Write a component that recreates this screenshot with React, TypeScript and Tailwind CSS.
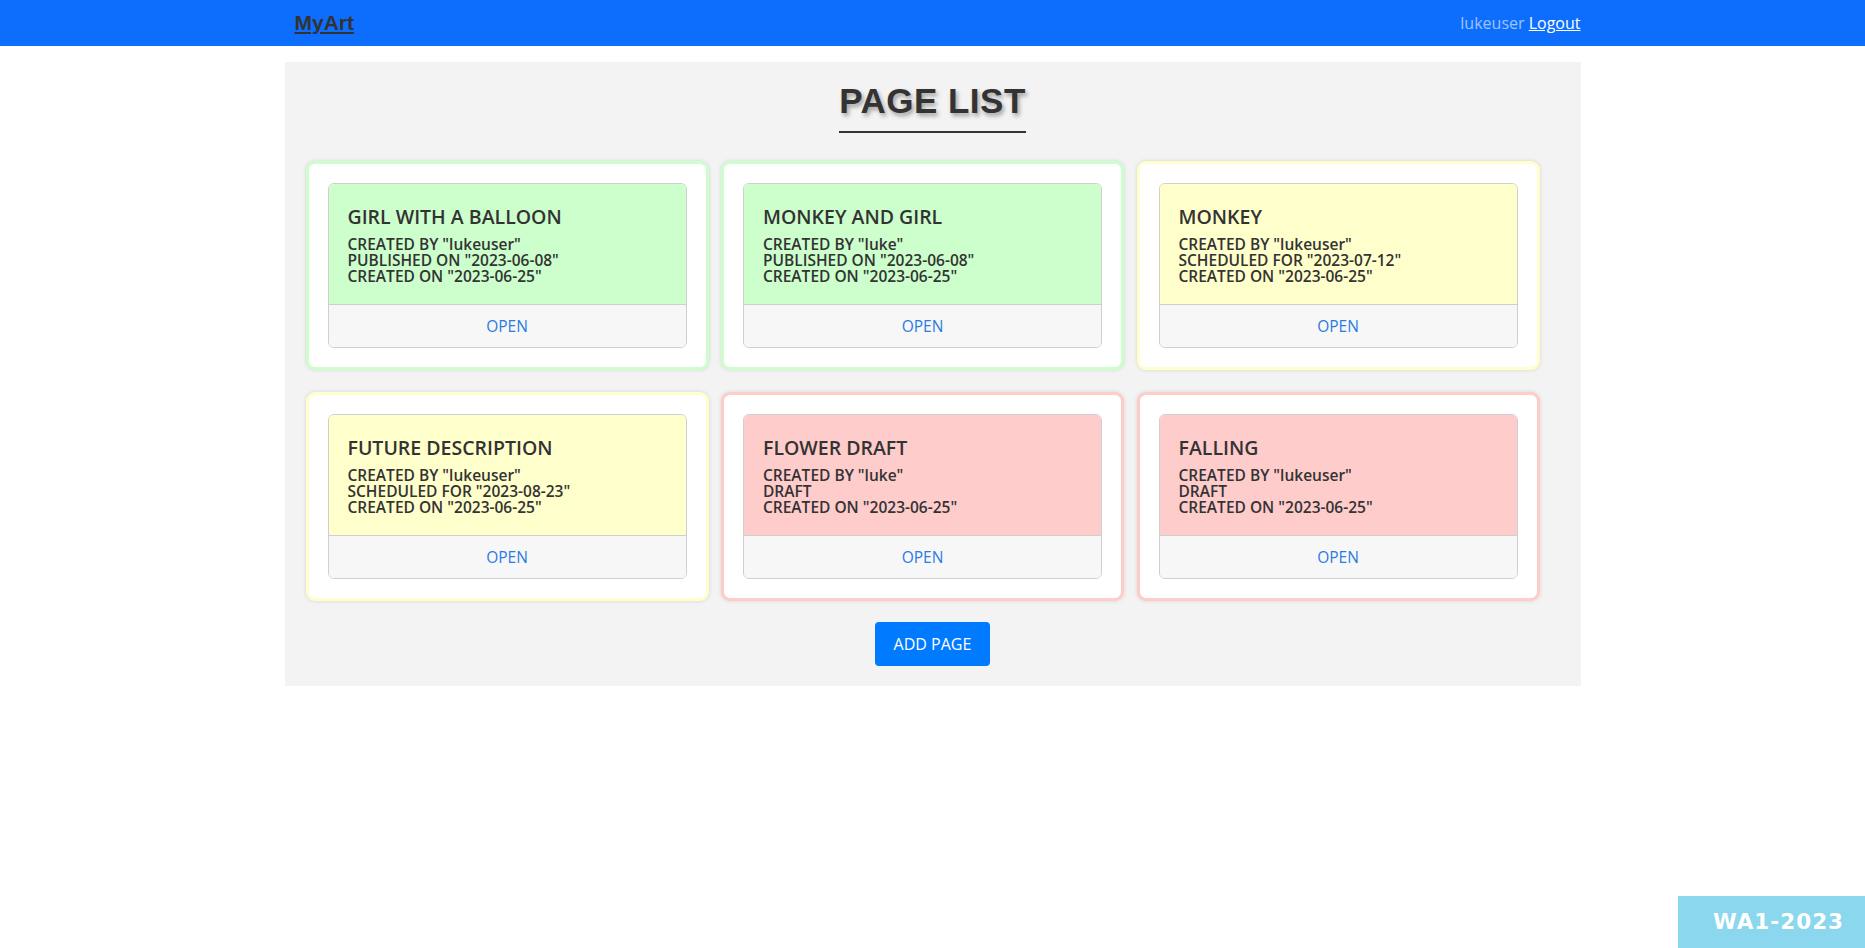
import React from "react";

type Page = {
  title: string;
  author: string;
  status: string;
  created: string;
  tone: "green" | "yellow" | "red";
};

const pages: Page[] = [
  { title: "GIRL WITH A BALLOON", author: "lukeuser", status: 'PUBLISHED ON "2023-06-08"', created: "2023-06-25", tone: "green" },
  { title: "MONKEY AND GIRL", author: "luke", status: 'PUBLISHED ON "2023-06-08"', created: "2023-06-25", tone: "green" },
  { title: "MONKEY", author: "lukeuser", status: 'SCHEDULED FOR "2023-07-12"', created: "2023-06-25", tone: "yellow" },
  { title: "FUTURE DESCRIPTION", author: "lukeuser", status: 'SCHEDULED FOR "2023-08-23"', created: "2023-06-25", tone: "yellow" },
  { title: "FLOWER DRAFT", author: "luke", status: "DRAFT", created: "2023-06-25", tone: "red" },
  { title: "FALLING", author: "lukeuser", status: "DRAFT", created: "2023-06-25", tone: "red" },
];

const outerTone = {
  green: "border-[#ccffcc]",
  yellow: "border-[#ffffcc]",
  red: "border-[#ffcccc]",
};
const innerTone = {
  green: "bg-[#ccffcc]",
  yellow: "bg-[#ffffcc]",
  red: "bg-[#ffcccc]",
};

const sans = "font-['Open_Sans','Noto_Sans',sans-serif]";

function Card({ p }: { p: Page }) {
  return (
    <div
      className={`h-[209px] rounded-[9px] border-[3px] bg-white px-[19px] pt-[19px] shadow-[0_0_4px_rgba(0,0,0,0.12)] ${outerTone[p.tone]}`}
    >
      <div className="overflow-hidden rounded-[6px] border border-[#cfcfcf]">
        <div className={`h-[120px] px-[19px] pt-[21px] text-[#333] ${innerTone[p.tone]}`}>
          <div className="text-[19.5px] font-semibold leading-[24px]">{p.title}</div>
          <div className="mt-[7px] text-[15.5px] font-semibold leading-[16px]">
            <div className="h-[16px]">CREATED BY "{p.author}"</div>
            <div className="h-[16px]">{p.status}</div>
            <div className="h-[16px]">CREATED ON "{p.created}"</div>
          </div>
        </div>
        <div className="flex h-[43px] items-center justify-center border-t border-[#cfcfcf] bg-[#f7f7f7] pt-[2px] text-[15.5px] text-[#2a7be4]">
          OPEN
        </div>
      </div>
    </div>
  );
}

export default function App() {
  return (
    <div className={`min-h-screen bg-white ${sans}`}>
      <nav className="h-[46px] bg-[#0d6efd]">
        <div className="mx-auto flex h-full w-[1296px] items-center justify-between pl-[10px]">
          <span className="font-['Liberation_Sans',Arial,sans-serif] text-[21px] font-bold text-[#333] underline decoration-[2px] underline-offset-[2px]">
            MyArt
          </span>
          <span className="text-[16px] text-[rgba(255,255,255,0.6)]">
            lukeuser <span className="text-white underline">Logout</span>
          </span>
        </div>
      </nav>

      <main className="mx-auto mt-[16px] w-[1296px] bg-[#f3f3f3] pb-[20px] pt-[18px]">
        <div className="flex justify-center">
          <h1 className="inline-block border-b-2 border-[#333] pb-[9px] font-['Liberation_Sans',Arial,sans-serif] text-[35px] font-bold leading-[42px] tracking-[0.5px] text-[#333] [text-shadow:2px_3px_4px_rgba(0,0,0,0.35)]">
            PAGE LIST
          </h1>
        </div>

        <div className="mt-[28px] grid grid-cols-[403px_403px_403px] gap-x-[12.5px] gap-y-[22px] pl-[21px]">
          {pages.map((p) => (
            <Card key={p.title} p={p} />
          ))}
        </div>

        <div className="mt-[21px] flex justify-center">
          <button className="h-[44px] w-[115px] rounded-[4px] bg-[#007bff] text-[16px] text-white">
            ADD PAGE
          </button>
        </div>
      </main>

      <div className="fixed bottom-0 right-0 flex h-[52px] w-[187px] items-center justify-center bg-[#8ad7ee] pl-[14px] font-['DejaVu_Sans',sans-serif] text-[21.5px] font-bold tracking-[1px] text-white">
        WA1-2023
      </div>
    </div>
  );
}
